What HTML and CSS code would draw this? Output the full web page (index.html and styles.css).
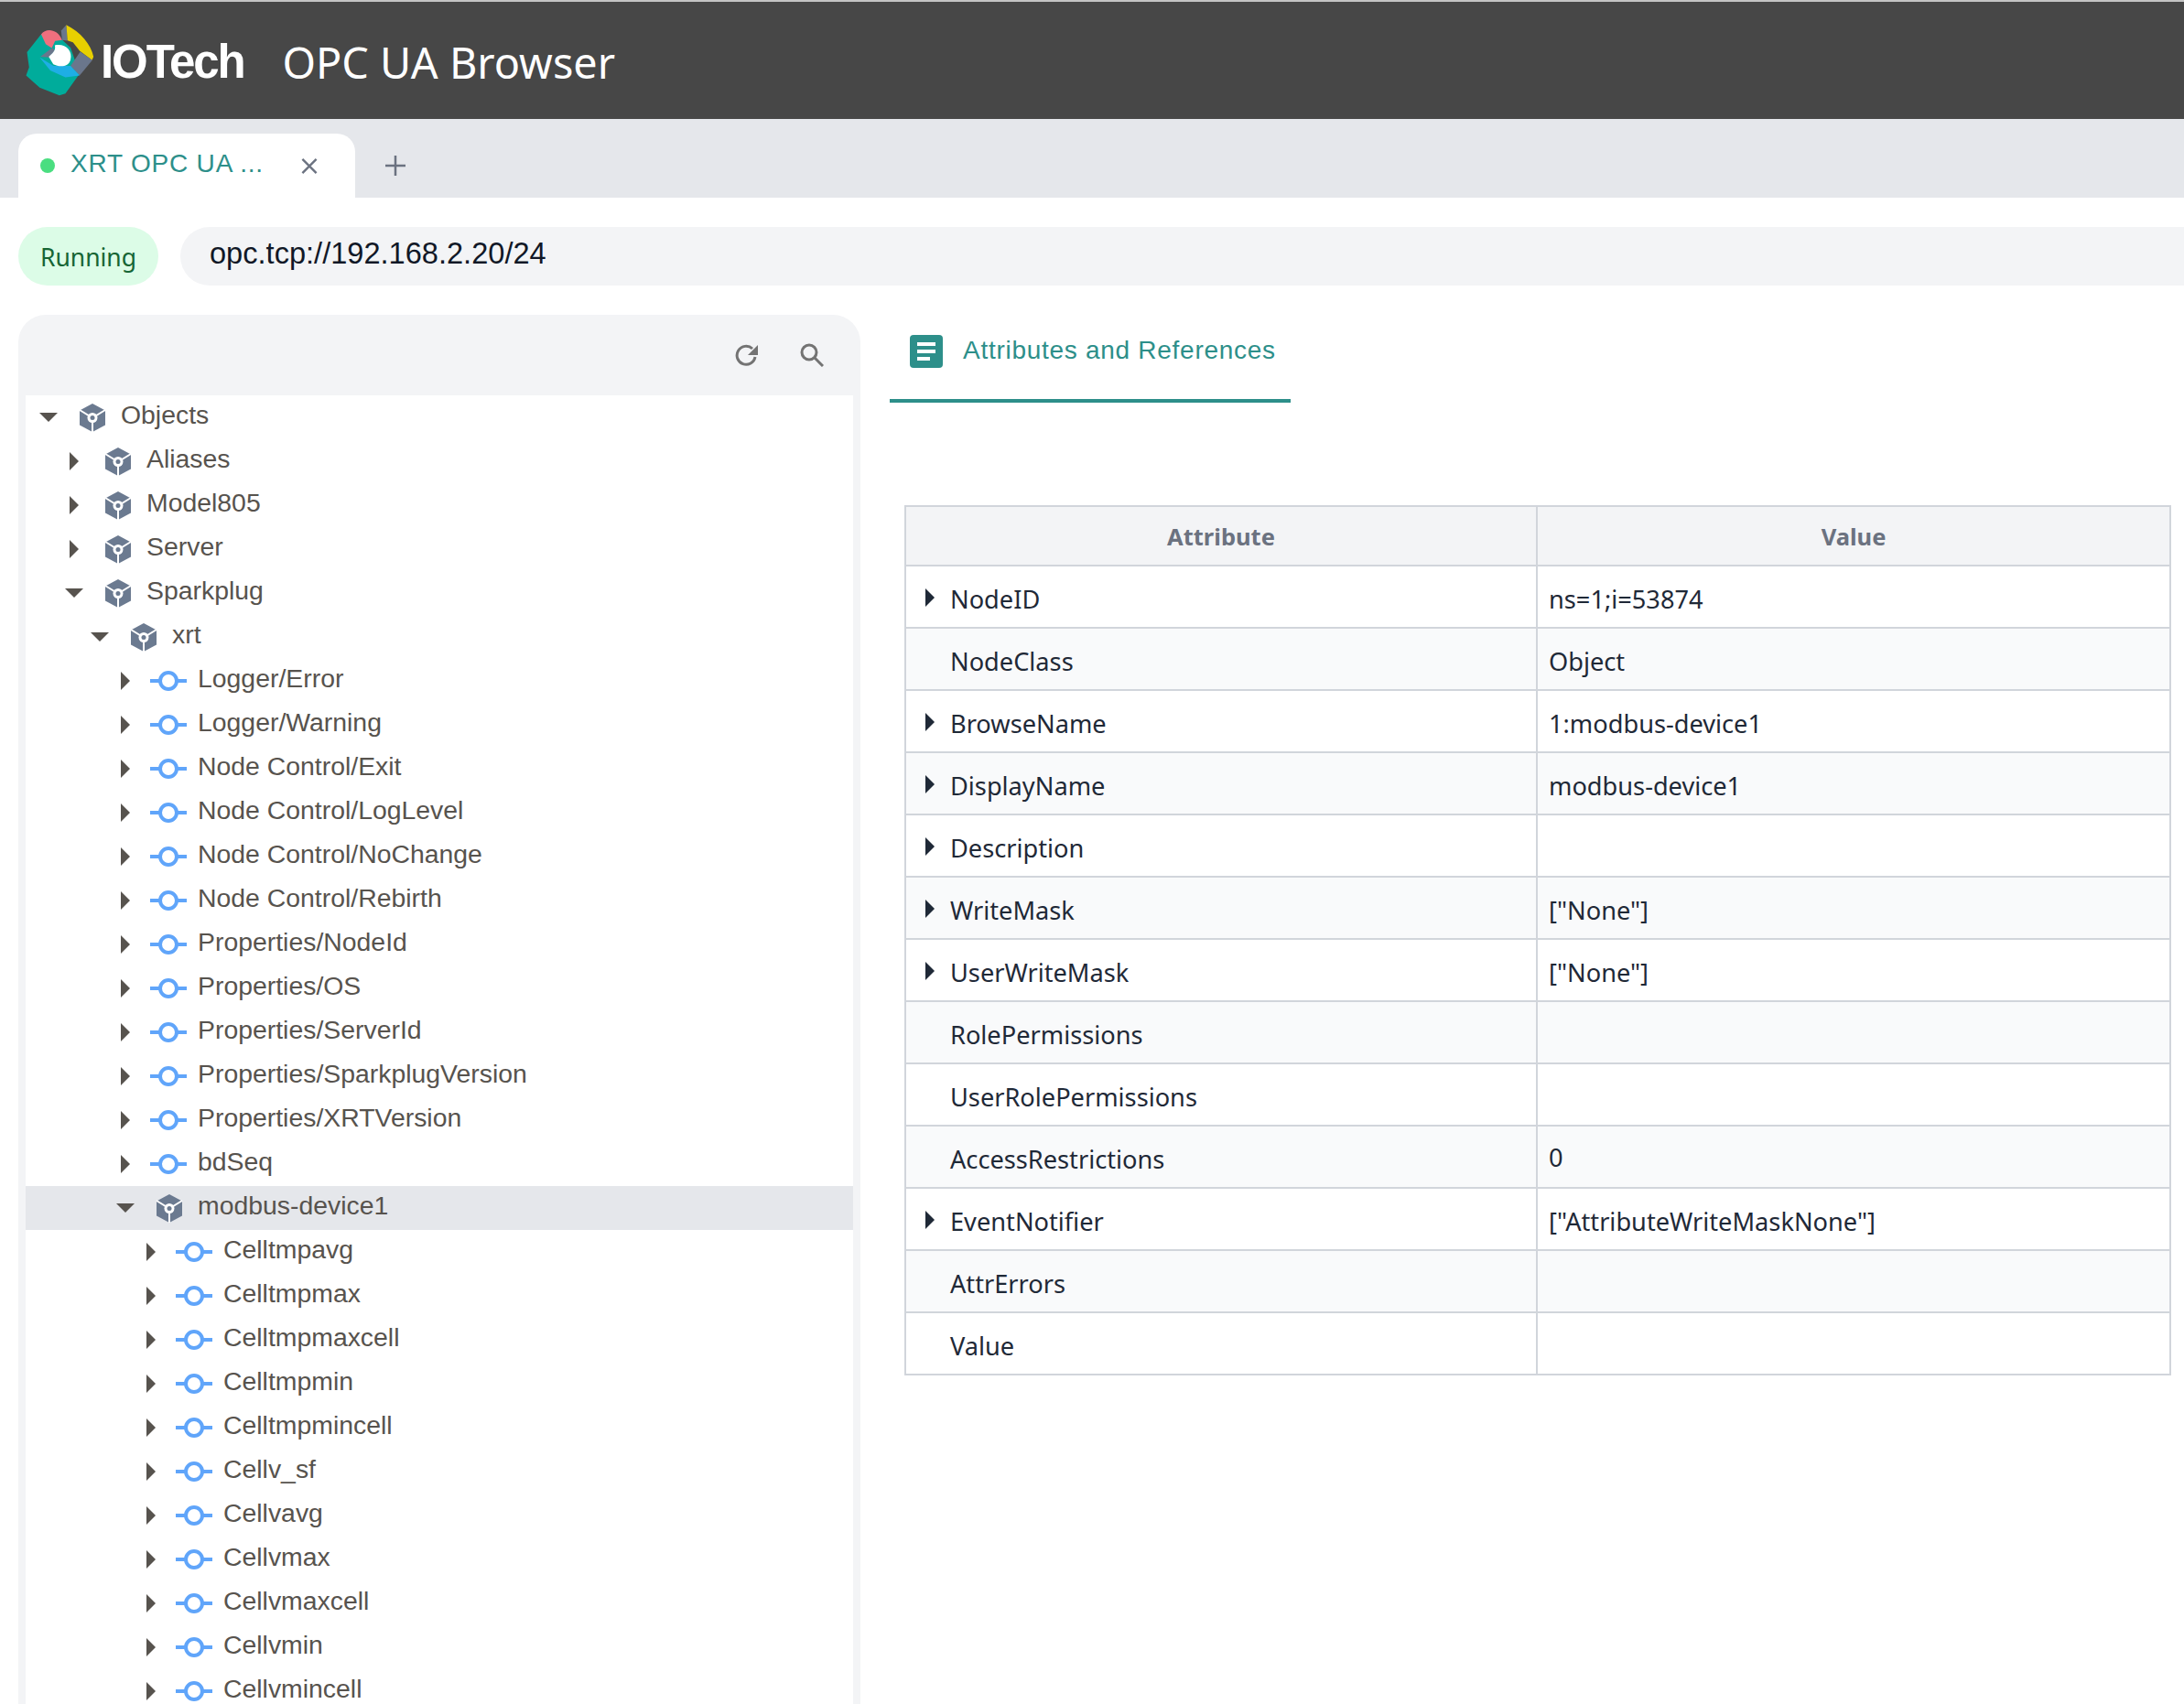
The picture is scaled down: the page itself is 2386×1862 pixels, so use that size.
FILE: index.html
```html
<!DOCTYPE html>
<html lang="en">
<head>
    <meta charset="UTF-8">
    <title>OPC UA Browser</title>
    <link rel="stylesheet" href="styles.css">
</head>
<body>
    <svg class="defs" width="0" height="0">
        <symbol id="cube" viewBox="0 0 30 31">
            <path d="M15 0 29 7.500V23.500L15 31 1 23.500V7.500Z" fill="#6b7a90"/>
            <path d="M1 7 15 15.500 29 7M15 15.500V31" fill="none" stroke="#fff" stroke-width="2"/>
            <circle cx="15" cy="15.500" r="5.500" fill="#fff"/>
            <circle cx="15" cy="15.500" r="2.500" fill="#6b7a90"/>
        </symbol>
        <symbol id="signal" viewBox="0 0 40 22">
            <path d="M0 11H40" stroke="#60a5fa" stroke-width="4"/>
            <circle cx="20" cy="11" r="9" fill="#fff" stroke="#60a5fa" stroke-width="4"/>
        </symbol>
    </svg>

    <header class="topbar">
        <svg class="logo" viewBox="84 54 226 236">
            <path d="M136 84 88 145 95 195 85 222 130 262 195 288 215 282 262 216 232 130 200 100Z" fill="#00ac9b"/>
            <path d="M135 86C150 64 190 68 204 105L181 108 170 131 150 118Z" fill="#ef6f7e"/>
            <path d="M201 74 218 55 222 107 204 105Z" fill="#6a768c"/>
            <path d="M218 55C265 78 300 120 308 160L303 171 262 140 240 112 222 106Z" fill="#e8d000"/>
            <path d="M264 143 304 171 262 222 232 190Z" fill="#6a768c"/>
            <path d="M130 162 176 190 232 190 262 222 215 228 165 205Z" fill="#1eaee5"/>
            <path d="M132 160 172 130 180 140 160 162Z" fill="#6a768c"/>
            <path d="M180 122C215 115 240 140 232 170 226 195 195 195 175 185L160 160C170 150 185 140 180 122Z" fill="#fff"/>
        </svg>
        <span class="brand">IOTech</span>
        <span class="app-title">OPC UA Browser</span>
    </header>

    <nav class="tabbar">
        <div class="tab">
            <span class="tab-dot"></span>
            <span class="tab-label">XRT OPC UA ...</span>
            <svg class="tab-close" viewBox="0 0 20 20"><path d="M2 2 18 18M18 2 2 18" stroke="#6b7280" stroke-width="2.500"/></svg>
        </div>
        <svg class="tab-add" viewBox="0 0 22 22"><path d="M11 0V22M0 11H22" stroke="#6b7280" stroke-width="2.500"/></svg>
    </nav>

    <div class="status-row">
        <span class="status-pill">Running</span>
        <div class="url-bar">opc.tcp://192.168.2.20/24</div>
    </div>

    <main class="content">
        <section class="tree-panel">
            <div class="tree-tools">
                <svg class="tool" viewBox="0 0 26 26"><path d="M22 15A10 10 0 1 1 19 6" fill="none" stroke="#737373" stroke-width="3"/><path d="M25 2V13H14Z" fill="#737373"/></svg>
                <svg class="tool" viewBox="0 0 26 26"><circle cx="10" cy="10" r="8" fill="none" stroke="#737373" stroke-width="3"/><path d="M16 16 25 25" stroke="#737373" stroke-width="3"/></svg>
            </div>
            <ul class="tree">
                <li class="node lv0"><i class="caret open"></i><svg class="node-icon"><use href="#cube" x="5" width="30" height="31"/></svg><span>Objects</span></li>
                <li class="node lv1"><i class="caret"></i><svg class="node-icon"><use href="#cube" x="5" width="30" height="31"/></svg><span>Aliases</span></li>
                <li class="node lv1"><i class="caret"></i><svg class="node-icon"><use href="#cube" x="5" width="30" height="31"/></svg><span>Model805</span></li>
                <li class="node lv1"><i class="caret"></i><svg class="node-icon"><use href="#cube" x="5" width="30" height="31"/></svg><span>Server</span></li>
                <li class="node lv1"><i class="caret open"></i><svg class="node-icon"><use href="#cube" x="5" width="30" height="31"/></svg><span>Sparkplug</span></li>
                <li class="node lv2"><i class="caret open"></i><svg class="node-icon"><use href="#cube" x="5" width="30" height="31"/></svg><span>xrt</span></li>
                <li class="node lv3"><i class="caret"></i><svg class="node-icon"><use href="#signal" y="4" width="40" height="22"/></svg><span>Logger/Error</span></li>
                <li class="node lv3"><i class="caret"></i><svg class="node-icon"><use href="#signal" y="4" width="40" height="22"/></svg><span>Logger/Warning</span></li>
                <li class="node lv3"><i class="caret"></i><svg class="node-icon"><use href="#signal" y="4" width="40" height="22"/></svg><span>Node Control/Exit</span></li>
                <li class="node lv3"><i class="caret"></i><svg class="node-icon"><use href="#signal" y="4" width="40" height="22"/></svg><span>Node Control/LogLevel</span></li>
                <li class="node lv3"><i class="caret"></i><svg class="node-icon"><use href="#signal" y="4" width="40" height="22"/></svg><span>Node Control/NoChange</span></li>
                <li class="node lv3"><i class="caret"></i><svg class="node-icon"><use href="#signal" y="4" width="40" height="22"/></svg><span>Node Control/Rebirth</span></li>
                <li class="node lv3"><i class="caret"></i><svg class="node-icon"><use href="#signal" y="4" width="40" height="22"/></svg><span>Properties/NodeId</span></li>
                <li class="node lv3"><i class="caret"></i><svg class="node-icon"><use href="#signal" y="4" width="40" height="22"/></svg><span>Properties/OS</span></li>
                <li class="node lv3"><i class="caret"></i><svg class="node-icon"><use href="#signal" y="4" width="40" height="22"/></svg><span>Properties/ServerId</span></li>
                <li class="node lv3"><i class="caret"></i><svg class="node-icon"><use href="#signal" y="4" width="40" height="22"/></svg><span>Properties/SparkplugVersion</span></li>
                <li class="node lv3"><i class="caret"></i><svg class="node-icon"><use href="#signal" y="4" width="40" height="22"/></svg><span>Properties/XRTVersion</span></li>
                <li class="node lv3"><i class="caret"></i><svg class="node-icon"><use href="#signal" y="4" width="40" height="22"/></svg><span>bdSeq</span></li>
                <li class="node lv3 selected"><i class="caret open"></i><svg class="node-icon"><use href="#cube" x="5" width="30" height="31"/></svg><span>modbus-device1</span></li>
                <li class="node lv4"><i class="caret"></i><svg class="node-icon"><use href="#signal" y="4" width="40" height="22"/></svg><span>Celltmpavg</span></li>
                <li class="node lv4"><i class="caret"></i><svg class="node-icon"><use href="#signal" y="4" width="40" height="22"/></svg><span>Celltmpmax</span></li>
                <li class="node lv4"><i class="caret"></i><svg class="node-icon"><use href="#signal" y="4" width="40" height="22"/></svg><span>Celltmpmaxcell</span></li>
                <li class="node lv4"><i class="caret"></i><svg class="node-icon"><use href="#signal" y="4" width="40" height="22"/></svg><span>Celltmpmin</span></li>
                <li class="node lv4"><i class="caret"></i><svg class="node-icon"><use href="#signal" y="4" width="40" height="22"/></svg><span>Celltmpmincell</span></li>
                <li class="node lv4"><i class="caret"></i><svg class="node-icon"><use href="#signal" y="4" width="40" height="22"/></svg><span>Cellv_sf</span></li>
                <li class="node lv4"><i class="caret"></i><svg class="node-icon"><use href="#signal" y="4" width="40" height="22"/></svg><span>Cellvavg</span></li>
                <li class="node lv4"><i class="caret"></i><svg class="node-icon"><use href="#signal" y="4" width="40" height="22"/></svg><span>Cellvmax</span></li>
                <li class="node lv4"><i class="caret"></i><svg class="node-icon"><use href="#signal" y="4" width="40" height="22"/></svg><span>Cellvmaxcell</span></li>
                <li class="node lv4"><i class="caret"></i><svg class="node-icon"><use href="#signal" y="4" width="40" height="22"/></svg><span>Cellvmin</span></li>
                <li class="node lv4"><i class="caret"></i><svg class="node-icon"><use href="#signal" y="4" width="40" height="22"/></svg><span>Cellvmincell</span></li>
            </ul>
        </section>

        <section class="detail">
            <div class="detail-tab">
                <svg class="detail-icon" viewBox="0 0 36 36">
                    <rect width="36" height="36" rx="4" fill="#2d8f8a"/>
                    <path d="M8 8H28V12H8ZM8 16H28V20H8ZM8 24H22V28H8Z" fill="#fff"/>
                </svg>
                <span>Attributes and References</span>
            </div>
            <table class="attr-table">
                <thead>
                    <tr><th>Attribute</th><th>Value</th></tr>
                </thead>
                <tbody>
                    <tr><td><i class="row-caret"></i>NodeID</td><td>ns=1;i=53874</td></tr>
                    <tr><td>NodeClass</td><td>Object</td></tr>
                    <tr><td><i class="row-caret"></i>BrowseName</td><td>1:modbus-device1</td></tr>
                    <tr><td><i class="row-caret"></i>DisplayName</td><td>modbus-device1</td></tr>
                    <tr><td><i class="row-caret"></i>Description</td><td></td></tr>
                    <tr><td><i class="row-caret"></i>WriteMask</td><td>["None"]</td></tr>
                    <tr><td><i class="row-caret"></i>UserWriteMask</td><td>["None"]</td></tr>
                    <tr><td>RolePermissions</td><td></td></tr>
                    <tr><td>UserRolePermissions</td><td></td></tr>
                    <tr><td>AccessRestrictions</td><td class="num-cell">0</td></tr>
                    <tr><td><i class="row-caret"></i>EventNotifier</td><td>["AttributeWriteMaskNone"]</td></tr>
                    <tr><td>AttrErrors</td><td></td></tr>
                    <tr><td>Value</td><td></td></tr>
                </tbody>
            </table>
        </section>
    </main>
</body>
</html>
```

FILE: styles.css
```css
* {
    margin: 0;
    padding: 0;
    box-sizing: border-box;
}

html, body {
    height: 100%;
    overflow: hidden;
}

body {
    background: #fff;
    font-family: "Liberation Sans", Arial, sans-serif;
    color: #111827;
}

.defs {
    position: absolute;
}

/* header */
.topbar {
    display: flex;
    align-items: center;
    height: 130px;
    padding-left: 28px;
    background: #474747;
    border-top: 2px solid #c4c4c4;
}

.logo {
    width: 75px;
    height: 78px;
}

.brand {
    margin-left: 7px;
    margin-top: 2px;
    font-family: "Liberation Sans", Arial, sans-serif;
    font-size: 51px;
    font-weight: 700;
    letter-spacing: -2.100px;
    color: #fff;
}

.app-title {
    margin-left: 42px;
    margin-top: 3px;
    font-family: "Noto Sans", sans-serif;
    font-size: 46.800px;
    color: #fff;
}

/* tabs */
.tabbar {
    display: flex;
    align-items: flex-end;
    height: 86px;
    padding-left: 20px;
    background: #e5e7eb;
}

.tab {
    display: flex;
    align-items: center;
    width: 368px;
    height: 70px;
    padding-left: 24px;
    background: #fff;
    border-radius: 20px 20px 0 0;
}

.tab-dot {
    width: 16px;
    height: 16px;
    border-radius: 50%;
    background: #4ade80;
}

.tab-label {
    width: 251px;
    margin-left: 17px;
    margin-bottom: 4px;
    font-size: 28px;
    letter-spacing: 0.800px;
    color: #2d8f8a;
    white-space: nowrap;
}

.tab-close {
    width: 20px;
    height: 19px;
}

.tab-add {
    width: 22px;
    height: 22px;
    margin-left: 33px;
    margin-bottom: 24px;
}

/* status */
.status-row {
    display: flex;
    gap: 24px;
    height: 96px;
    padding: 32px 0 0 20px;
}

.status-pill {
    display: flex;
    align-items: center;
    justify-content: center;
    width: 153px;
    height: 64px;
    padding-top: 2px;
    border-radius: 32px;
    background: #dcfce7;
    font-family: "Noto Sans", sans-serif;
    font-size: 26.500px;
    color: #166534;
}

.url-bar {
    flex: 1;
    height: 64px;
    padding-left: 32px;
    border-radius: 32px 0 0 32px;
    background: #f3f4f6;
    font-size: 32.600px;
    line-height: 58px;
}

/* main */
.content {
    display: flex;
    padding: 32px 14px 0 20px;
}

.tree-panel {
    width: 920px;
    height: 1600px;
    padding: 0 8px;
    background: #f3f4f6;
    border-radius: 30px 30px 0 0;
}

.tree-tools {
    display: flex;
    justify-content: flex-end;
    align-items: center;
    gap: 45px;
    height: 88px;
    padding: 0 32px 0 0;
}

.tool {
    width: 26px;
    height: 26px;
}

.tree {
    list-style: none;
    height: 1512px;
    background: #fff;
}

.node {
    display: flex;
    align-items: center;
    height: 48px;
    font-size: 28.400px;
    color: #57534e;
}

.node span {
    margin-left: 11px;
    margin-bottom: 6px;
}

.lv0 { padding-left: 10px; }
.lv1 { padding-left: 38px; }
.lv2 { padding-left: 66px; }
.lv3 { padding-left: 94px; }
.lv4 { padding-left: 122px; }

.selected {
    background: #e5e7eb;
}

.caret {
    display: flex;
    justify-content: center;
    flex: none;
    width: 29px;
    margin-right: 14px;
}

.caret::before {
    content: "";
    border-style: solid;
    border-width: 10px 0 10px 10px;
    border-color: transparent transparent transparent #57534e;
}

.caret.open::before {
    border-width: 10px 10px 0;
    border-color: #57534e transparent transparent;
}

.node-icon {
    flex: none;
    width: 40px;
    height: 31px;
    overflow: visible;
}

.node-icon use[href="#signal"] {
    transform: translateX(-1px);
}

/* detail */
.detail {
    flex: 1;
    margin-left: 32px;
}

.detail-tab {
    display: flex;
    align-items: center;
    gap: 22px;
    width: 438px;
    height: 96px;
    padding: 0 0 12px 22px;
    border-bottom: 4px solid #2d8f8a;
    font-size: 28px;
    letter-spacing: 0.720px;
    color: #2d8f8a;
}

.detail-tab span {
    margin-bottom: 3px;
}

.detail-icon {
    width: 36px;
    height: 36px;
}

.attr-table {
    width: 1384px;
    margin: 112px 0 0 16px;
    border-collapse: collapse;
    table-layout: fixed;
    font-family: "Noto Sans", sans-serif;
    font-size: 27.200px;
    color: #1f2937;
}

.attr-table th,
.attr-table td {
    border: 2px solid #d1d5db;
}

.attr-table th {
    height: 65px;
    background: #f3f4f6;
    font-size: 25.500px;
    font-weight: 700;
    color: #6b7280;
}

.attr-table th:first-child {
    width: 690px;
}

.attr-table td {
    position: relative;
    height: 68px;
    padding-top: 4px;
    padding-left: 12px;
}

.attr-table td:first-child {
    padding-left: 48px;
}

.attr-table td.num-cell {
    padding-top: 0;
}

.attr-table tbody tr:nth-child(even) {
    background: #f9fafb;
}

.row-caret {
    position: absolute;
    left: 21px;
    top: 24px;
    border-style: solid;
    border-width: 10px 0 10px 10px;
    border-color: transparent transparent transparent #1f2937;
}
```
